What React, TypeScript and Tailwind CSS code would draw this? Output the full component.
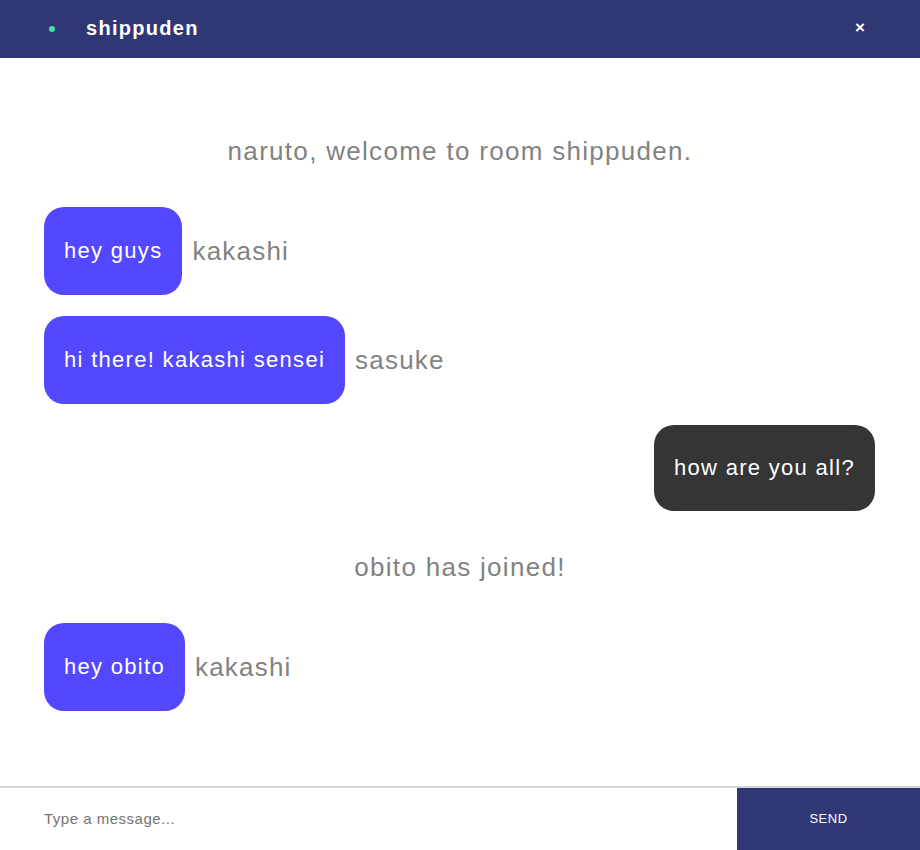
import { useState } from "react";

type Msg =
  | { kind: "system"; text: string }
  | { kind: "other"; text: string; user: string }
  | { kind: "self"; text: string };

const messages: Msg[] = [
  { kind: "system", text: "naruto, welcome to room shippuden." },
  { kind: "other", text: "hey guys", user: "kakashi" },
  { kind: "other", text: "hi there! kakashi sensei", user: "sasuke" },
  { kind: "self", text: "how are you all?" },
  { kind: "system", text: "obito has joined!" },
  { kind: "other", text: "hey obito", user: "kakashi" },
];

function Message({ msg }: { msg: Msg }) {
  if (msg.kind === "system") {
    return (
      <div className="py-[20px] text-center text-[26px] leading-[30px] text-[#828282] tracking-[1.3px]">
        {msg.text}
      </div>
    );
  }
  if (msg.kind === "self") {
    return (
      <div className="flex justify-end px-[45px]">
        <div className="rounded-[20px] bg-[#353535] px-[20px] py-[29px] text-[22px] leading-[28px] text-white tracking-[1.3px]">
          {msg.text}
        </div>
      </div>
    );
  }
  return (
    <div className="flex items-center px-[44px]">
      <div className="rounded-[20px] bg-[#5348ff] px-[20px] py-[30px] text-[22px] leading-[28px] text-white tracking-[1.3px]">
        {msg.text}
      </div>
      <span className="ml-[10px] text-[26px] text-[#828282] tracking-[1.2px]">{msg.user}</span>
    </div>
  );
}

export default function App() {
  const [value, setValue] = useState("");

  return (
    <div
      className="flex h-[850px] w-[920px] flex-col bg-white"
      style={{ fontFamily: '"Liberation Sans", Arial, sans-serif' }}
    >
      {/* Header */}
      <div className="flex h-[58px] shrink-0 items-center justify-between bg-[#2f3774] pl-[49px] pr-[55px]">
        <div className="flex items-center">
          <span className="h-[6px] w-[6px] rounded-full bg-[#3ae3a3]" />
          <span className="ml-[31px] pb-[2px] text-[20px] font-bold tracking-[1.3px] text-white">shippuden</span>
        </div>
        <span className="pb-[2px] text-[17px] font-bold text-white">×</span>
      </div>

      {/* Messages */}
      <div className="flex flex-1 flex-col gap-[21px] overflow-hidden pt-[58px]">
        {messages.map((m, i) => (
          <Message key={i} msg={m} />
        ))}
      </div>

      {/* Input */}
      <div className="flex h-[64px] shrink-0 border-t-2 border-[#d3d3d3]">
        <input
          value={value}
          onChange={(e) => setValue(e.target.value)}
          placeholder="Type a message..."
          className="flex-1 pl-[44px] text-[15px] tracking-[0.5px] text-[#333] outline-none placeholder:text-[#757575]"
        />
        <button className="w-[183px] bg-[#2f3774] text-[13px] tracking-[0.5px] text-white">SEND</button>
      </div>
    </div>
  );
}
